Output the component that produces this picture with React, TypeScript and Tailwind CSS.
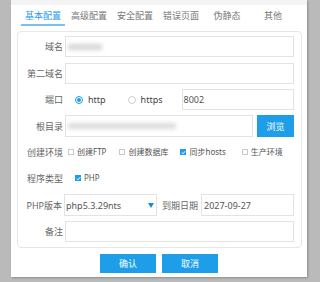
import React from 'react';

const tabs = ['基本配置', '高级配置', '安全配置', '错误页面', '伪静态', '其他'];

function Radio({ checked }: { checked?: boolean }) {
  return (
    <span className={`w-[8px] h-[8px] rounded-full border flex items-center justify-center ${checked ? 'border-[#1e9ee8]' : 'border-[#cfcfcf]'}`}>
      {checked && <span className="w-[4px] h-[4px] rounded-full bg-[#1e9ee8]" />}
    </span>
  );
}

function Check({ checked }: { checked?: boolean }) {
  if (checked) {
    return (
      <span className="w-[6px] h-[6px] bg-[#1e9ee8] flex items-center justify-center">
        <svg width="5" height="5" viewBox="0 0 6 6" fill="none" stroke="white" strokeWidth="1.2">
          <path d="M1 3 L2.5 4.5 L5 1.5" />
        </svg>
      </span>
    );
  }
  return <span className="w-[6px] h-[6px] border border-[#c9c9c9] bg-white" />;
}

function Label({ children }: { children: React.ReactNode }) {
  return <div className="w-[47px] shrink-0 pr-[2px] text-right text-[#666] text-[9px]">{children}</div>;
}

export default function App() {
  return (
    <div className="w-[320px] h-[282px] bg-[#bababa] overflow-hidden text-[9px] leading-none whitespace-nowrap" style={{ fontFamily: '"Noto Sans", "Noto Sans CJK SC", sans-serif' }}>
      <div className="ml-[11px] w-[296px] h-[277px] bg-white shadow-[1px_1px_2px_rgba(0,0,0,0.25)] flex flex-col">
        <div className="h-[5px] bg-[#f4f4f4]" />

        {/* tabs */}
        <div className="flex h-[21px] ml-[9px]">
          {tabs.map((t, i) => (
            <div key={t} className={`w-[46px] flex flex-col items-center justify-center relative ${i === 0 ? 'text-[#2a9cea]' : 'text-[#777]'}`}>
              {t}
              {i === 0 && <span className="absolute bottom-0 left-[1px] right-[1px] h-[2px] bg-[#7cc0f2]" />}
            </div>
          ))}
        </div>

        {/* form box */}
        <div className="mt-[5px] ml-[6px] w-[285px] h-[217px] border border-[#e6e6e6] rounded-[4px] pr-[7px] flex flex-col">
          <div className="flex items-center h-[21px] mt-[4px]">
            <Label>域名</Label>
            <div className="flex-1 h-full border border-[#e3e3e3] flex items-center pl-[2px]">
              <span className="w-[34px] h-[6px] bg-[#d6d6d6] blur-[2px]" />
            </div>
          </div>

          <div className="flex items-center h-[21px] mt-[6px]">
            <Label>第二域名</Label>
            <div className="flex-1 h-full border border-[#e3e3e3]" />
          </div>

          <div className="flex items-center h-[21px] mt-[5px]">
            <Label>端口</Label>
            <div className="flex items-center ml-[10px] gap-[5px] text-[#444]">
              <Radio checked />
              <span>http</span>
            </div>
            <div className="flex items-center ml-[22px] gap-[5px] text-[#444]">
              <Radio />
              <span>https</span>
            </div>
            <div className="flex-1 ml-[19px] h-full border border-[#e3e3e3] flex items-center pl-[1px] text-[#555]">8002</div>
          </div>

          <div className="flex items-center h-[22px] mt-[5px]">
            <Label>根目录</Label>
            <div className="flex-1 h-full border border-[#e3e3e3] flex items-center pl-[2px]">
              <span className="w-[108px] h-[6px] bg-[#dcdcdc] blur-[2px]" />
            </div>
            <div className="w-[37px] h-full ml-[4px] bg-[#1e9ee8] text-white flex items-center justify-center">浏览</div>
          </div>

          <div className="flex items-center h-[20px] mt-[5px] text-[#555] text-[8px]">
            <Label>创建环境</Label>
            <div className="flex items-center ml-[3px] gap-[3px]"><Check /><span>创建FTP</span></div>
            <div className="flex items-center ml-[13px] gap-[3px]"><Check /><span>创建数据库</span></div>
            <div className="flex items-center ml-[12px] gap-[3px]"><Check checked /><span>同步hosts</span></div>
            <div className="flex items-center ml-[16px] gap-[3px]"><Check /><span>生产环境</span></div>
          </div>

          <div className="flex items-center h-[20px] mt-[6px] text-[#555] text-[8px]">
            <Label>程序类型</Label>
            <div className="flex items-center ml-[10px] gap-[3px]"><Check checked /><span>PHP</span></div>
          </div>

          <div className="flex items-center h-[22px] mt-[6px]">
            <div className="w-[46px] shrink-0 pr-[2px] text-right text-[#666]">PHP版本</div>
            <div className="w-[93px] h-full border border-[#e3e3e3] flex items-center justify-between pl-[1px] pr-[2px] text-[#555]">
              <span>php5.3.29nts</span>
              <svg width="6" height="5" viewBox="0 0 6 5"><path d="M0 0 H6 L3 5 Z" fill="#1e88d8" /></svg>
            </div>
            <div className="ml-[5px] text-[#666]">到期日期</div>
            <div className="flex-1 ml-[3px] h-full border border-[#e3e3e3] flex items-center pl-[2px] text-[#555]">2027-09-27</div>
          </div>

          <div className="flex items-center h-[21px] mt-[5px]">
            <Label>备注</Label>
            <div className="flex-1 h-full border border-[#e3e3e3]" />
          </div>
        </div>

        {/* buttons */}
        <div className="flex justify-center gap-[6px] mt-[6px]">
          <div className="w-[56px] h-[19px] bg-[#1e9ee8] text-white flex items-center justify-center">确认</div>
          <div className="w-[56px] h-[19px] bg-[#1e9ee8] text-white flex items-center justify-center">取消</div>
        </div>
      </div>
    </div>
  );
}
